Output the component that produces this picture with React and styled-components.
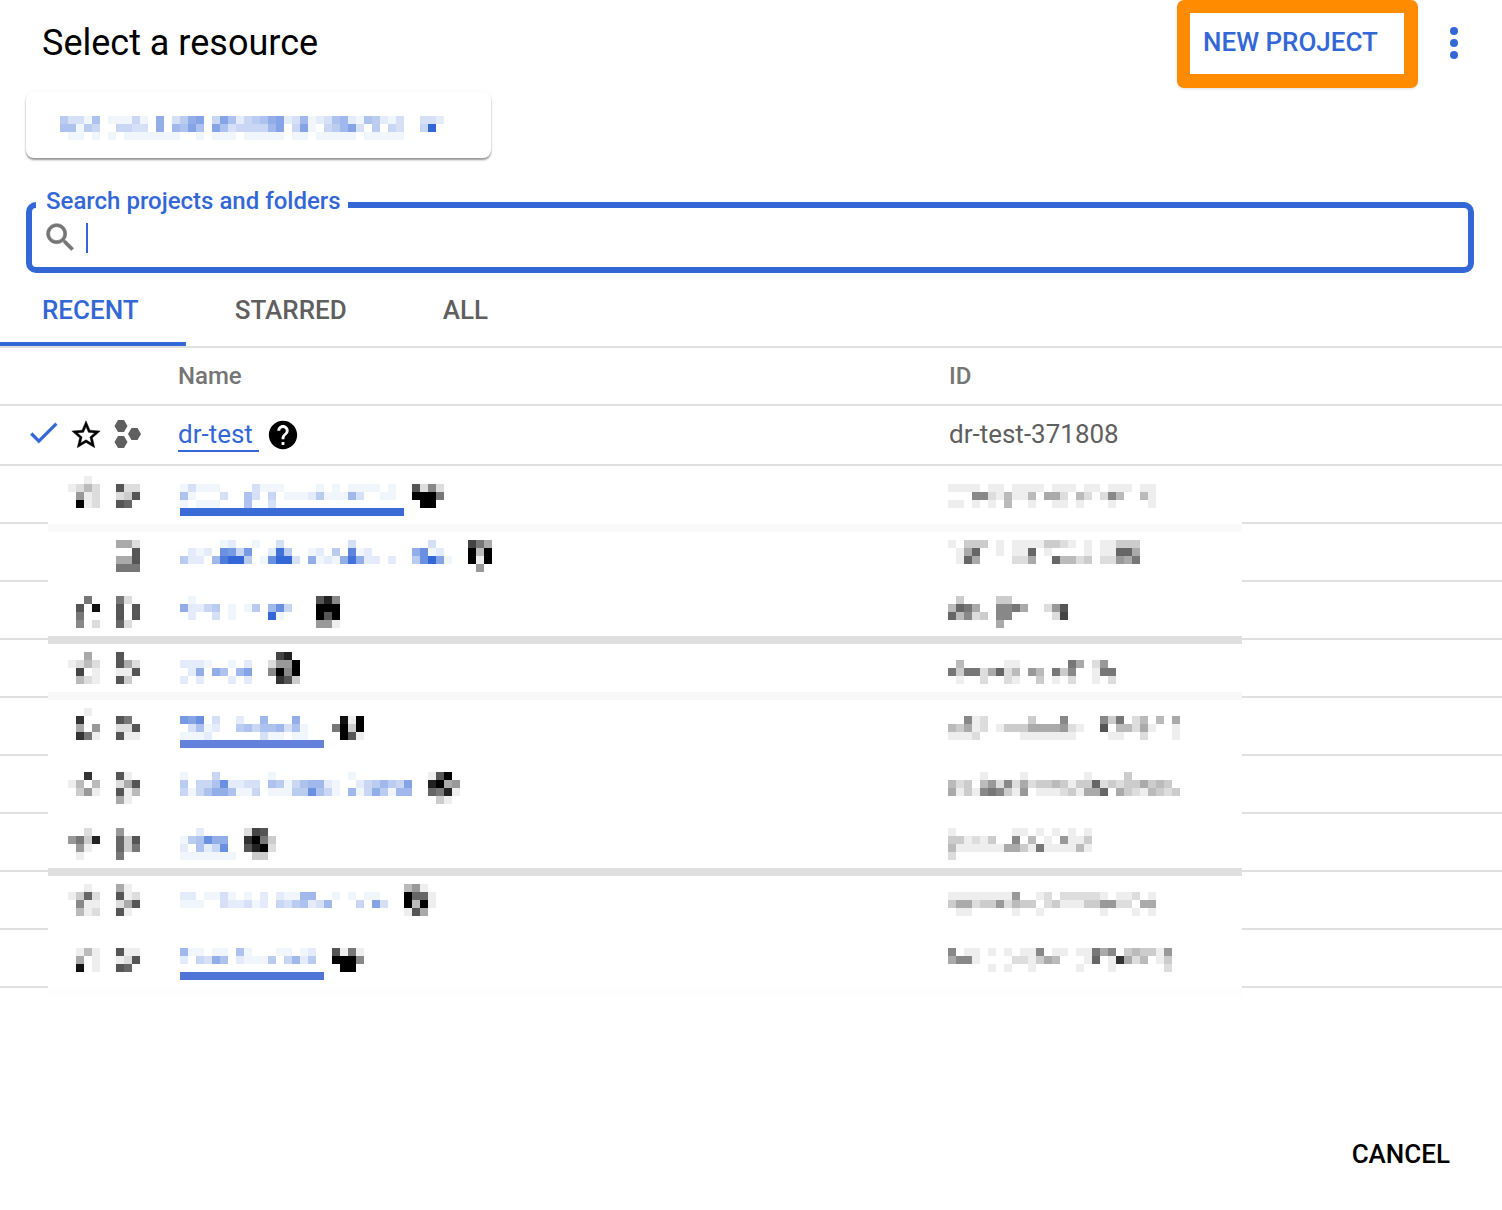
import React from 'react';
import styled, { createGlobalStyle } from 'styled-components';

const BLUE = '#3367d6';
const CELL = 8;

const GlobalStyle = createGlobalStyle`
  html, body {
    margin: 0;
    padding: 0;
    background: #fff;
  }
  body {
    font-family: Roboto, "Liberation Sans", sans-serif;
    color: #000;
  }
`;

const Page = styled.div`
  width: 1502px;
  height: 1210px;
  overflow: hidden;
  display: flex;
  flex-direction: column;
  background: #fff;
`;

const Header = styled.header`
  height: 92px;
  display: flex;
  align-items: flex-start;
  padding-left: 42px;
`;

const Title = styled.h1`
  flex: 1;
  margin: 21px 0 0;
  font-size: 36px;
  line-height: 44px;
  font-weight: 400;
`;

const NewProject = styled.button`
  box-sizing: border-box;
  width: 241px;
  height: 88px;
  padding: 0 0 3px 13px;
  margin: 0;
  border-style: solid;
  border-color: #ff8c00;
  border-width: 13px 14px 14px 13px;
  border-radius: 7px;
  background: #fff;
  color: ${BLUE};
  font: 500 26px/34px Roboto, sans-serif;
  text-align: left;
  white-space: nowrap;
  box-shadow: 0 1px 3px rgba(0, 0, 0, 0.12);
`;

const More = styled.svg`
  flex: none;
  width: 12px;
  height: 36px;
  margin: 25px 42px 0 30px;
`;

const Chip = styled.div`
  box-sizing: border-box;
  width: 465px;
  height: 66px;
  margin-left: 26px;
  padding: 24px 0 0 34px;
  border-radius: 8px;
  background: #fff;
  box-shadow: 0 2px 2px rgba(0, 0, 0, 0.4), 0 0 6px rgba(0, 0, 0, 0.03);
`;

const SearchBox = styled.div`
  box-sizing: border-box;
  position: relative;
  width: 1448px;
  height: 71px;
  margin: 44px 0 0 26px;
  padding: 11px 0 0 10px;
  display: flex;
  align-items: flex-start;
  gap: 7px;
  border: 6px solid ${BLUE};
  border-radius: 10px;
`;

const SearchLabel = styled.label`
  position: absolute;
  left: 4px;
  top: -23px;
  padding: 0 7px 0 10px;
  background: #fff;
  color: ${BLUE};
  font-size: 24px;
  line-height: 32px;
  font-weight: 500;
  white-space: nowrap;
`;

const Caret = styled.span`
  width: 2px;
  height: 30px;
  margin-top: 4px;
  background: ${BLUE};
`;

const Tabs = styled.nav`
  height: 73px;
  margin-top: 2px;
  display: flex;
  box-sizing: border-box;
  border-bottom: 2px solid #e0e0e0;
`;

const Tab = styled.div`
  box-sizing: border-box;
  height: 71px;
  padding: 0 47px 0 ${(p) => (p.$first ? 42 : 49)}px;
  font-size: 26px;
  line-height: 70px;
  font-weight: 500;
  white-space: nowrap;
  color: ${(p) => (p.$active ? BLUE : '#5f5f5f')};
  border-bottom: 4px solid ${(p) => (p.$active ? BLUE : 'transparent')};
`;

const Grid = styled.div`
  display: grid;
  grid-template-columns: 178px 770px 1fr;
  box-sizing: border-box;
  border-bottom: 2px solid #e0e0e0;
`;

const HeadRow = styled(Grid)`
  height: 58px;
  align-items: center;
  color: #757575;
  font-size: 24px;
  font-weight: 500;
`;

const HeadId = styled.span`
  margin-left: 1px;
`;

const ActiveRow = styled(Grid)`
  height: 60px;
  align-items: center;
`;

const BlurRow = styled(Grid)`
  position: relative;
  height: 58px;
  align-items: start;

  /* the pixelated band over the separator */
  &::after {
    content: '';
    position: absolute;
    left: 48px;
    width: 1194px;
    height: ${CELL}px;
    top: ${(p) => p.$bandTop ?? 58}px;
    background: ${(p) => p.$band || '#fff'};
    box-shadow: 0 -${CELL}px 0 #fff;
  }
`;

const IconCell = styled.div`
  display: flex;
  align-items: flex-start;
  padding-left: 68px;
`;

const ActiveIcons = styled.div`
  display: flex;
  align-items: center;
  padding-left: 25px;
`;

const NameCell = styled.div`
  display: flex;
  align-items: ${(p) => (p.$center ? 'center' : 'flex-start')};
`;

const NameStack = styled.div`
  display: flex;
  flex-direction: column;
  margin: ${(p) => p.$top}px 0 0 2px;
`;

const Underline = styled.div`
  width: ${(p) => p.$width}px;
  height: ${CELL}px;
  background: ${(p) => p.$color};
`;

const ProjectLink = styled.a`
  box-sizing: border-box;
  width: 81px;
  height: 33px;
  color: ${BLUE};
  font-size: 26px;
  line-height: 30px;
  border-bottom: 2px solid ${BLUE};
`;

const ProjectId = styled.div`
  color: #5f5f5f;
  font-size: 26px;
  margin: -2px 0 0 1px;
`;

const Footer = styled.footer`
  flex: 1;
  display: flex;
  justify-content: flex-end;
  align-items: flex-start;
  padding: 148px 52px 0 0;
`;

const Cancel = styled.button`
  padding: 0;
  border: 0;
  background: none;
  color: #000;
  font: 500 26px/36px Roboto, sans-serif;
`;

const Pixels = styled.svg`
  display: block;
  flex: none;
  margin-top: ${(p) => p.$top || 0}px;
  margin-left: ${(p) => p.$left || 0}px;
`;

const Icon = styled.svg`
  display: block;
  flex: none;
  margin-top: ${(p) => p.$top || 0}px;
  margin-left: ${(p) => p.$left || 0}px;
`;

// cells are hex darkness levels, one string per pixel row
const Mosaic = ({ cells, tint = '#000', top, left }) => {
  const rows = cells.split(' ');
  const cols = Math.max(...rows.map((r) => r.length));
  return (
    <Pixels
      $top={top}
      $left={left}
      width={cols * CELL}
      height={rows.length * CELL}
      viewBox={`0 0 ${cols} ${rows.length}`}
      shapeRendering="crispEdges"
    >
      {rows.map((row, y) =>
        [...row].map((c, x) => {
          const level = parseInt(c, 16);
          return level ? (
            <rect key={`${x}-${y}`} x={x} y={y} width="1" height="1" fill={tint} opacity={level / 15} />
          ) : null;
        })
      )}
    </Pixels>
  );
};

const Glyph = ({ d, size, color, top, left, bold }) => (
  <Icon
    $top={top}
    $left={left}
    width={size}
    height={size}
    viewBox="0 0 24 24"
    fill={color}
    stroke={bold ? color : 'none'}
    strokeWidth={bold || 0}
  >
    <path d={d} />
  </Icon>
);

const SEARCH =
  'M15.5 14h-.79l-.28-.27C15.41 12.59 16 11.11 16 9.5 16 5.91 13.09 3 9.5 3S3 5.91 3 9.5 5.91 16 9.5 16c1.61 0 3.09-.59 4.23-1.57l.27.28v.79l5 4.99L20.49 19l-4.99-5zm-6 0C7.01 14 5 11.99 5 9.5S7.01 5 9.5 5 14 7.01 14 9.5 11.99 14 9.5 14z';
const CHECK = 'M9 16.2L4.8 12l-1.4 1.4L9 19 21 7l-1.4-1.4L9 16.2z';
const STAR =
  'M22 9.24l-7.19-.62L12 2 9.19 8.63 2 9.24l5.46 4.73L5.82 21 12 17.27 18.18 21l-1.63-7.03L22 9.24zM12 15.4l-3.76 2.27 1-4.28-3.32-2.88 4.38-.38L12 6.1l1.71 4.04 4.38.38-3.32 2.88 1 4.28L12 15.4z';
const HELP =
  'M12 2C6.48 2 2 6.48 2 12s4.48 10 10 10 10-4.48 10-10S17.52 2 12 2zm1 17h-2v-2h2v2zm2.07-7.75l-.9.92C13.45 12.9 13 13.5 13 15h-2v-.5c0-1.1.45-2.1 1.17-2.83l1.24-1.26c.37-.36.59-.86.59-1.41 0-1.1-.9-2-2-2s-2 .9-2 2H8c0-2.21 1.79-4 4-4s4 1.79 4 4c0 .88-.36 1.68-.93 2.25z';

const Hive = () => (
  <Icon $left={11} width="30" height="32" viewBox="0 0 30 32" fill="#5f5f5f">
    <polygon points="0.5,7 4,1 10,1 13.5,7 10,13 4,13" />
    <polygon points="0.5,23 4,17 10,17 13.5,23 10,29 4,29" />
    <polygon points="14,15 17.5,9 23.5,9 27,15 23.5,21 17.5,21" />
  </Icon>
);

const CHIP_CELLS = [
  '533160111410803589049624568923712367216521300332',
  '6615400443308076960963444479049104579305043004f0',
  '011010101111111001011101111101101111101111100000',
].join(' ');

const ROWS = [
  {
    star: [10, '0010 1242 0612 0f12'],
    hive: [18, 'a22 23a a90'],
    name: [18, '131110000311100001010111101 610003006304011125111730011 101110006003000000000000000'],
    underline: [224, '#3b6bd6'],
    gap: 8,
    badge: [18, 'a272 fff8 0ff0'],
    id: [18, '11110110111101110110111011 00077214114055204202740041 11010104001001101000100001'],
    band: '#fafafa',
  },
  {
    hive: [16, '552 00a 55a 888'],
    name: [16, '0000012001003000000003000000000300 02120ba4a002e50012050c12000008b120 52207dff501bff3081218e82202005bf91'],
    gap: 16,
    badge: [16, 'b85 f4f f1f 060'],
    id: [16, '103330101111332101011333 015900101190100001011995 019500002250094423022658'],
  },
  {
    star: [14, '0080 0a0e 0800 0702'],
    hive: [14, '820 a0a a0a 920'],
    name: [14, '010000000000000 822450101507b40 02003010000f100'],
    gap: 16,
    badge: [14, 'ad7 fff faf 661'],
    id: [14, '030000330000000 49850077850026a 94723077000002b 000000500000000'],
    bandTop: 54,
    band: '#dfdfdf',
  },
  {
    star: [12, '0050 1242 0b01 0421'],
    hive: [12, 'a00 a52 11a a30'],
    name: [20, '222100102 028086079 202000202'],
    gap: 16,
    badge: [12, '0bd0 266f 7f7f 0ca3'],
    id: [20, '0400000110000008502600 8388259240640837001880 0100200210030102001020'],
    bandTop: 52,
    band: '#f8f8f8',
  },
  {
    star: [10, '0010 0c00 0506 0c81'],
    hive: [18, 'a80 22a a11'],
    name: [18, 'a9b03002007000800 03612005646673610 11120000003110110'],
    underline: [144, '#6482dc'],
    gap: 8,
    badge: [18, '0e1f 8f3f 0fa1'],
    id: [18, '00712000003000700007380240405 4351201333555562100a044251001 11120000011111110000110020001'],
  },
  {
    star: [16, '00c0 1404 0361'],
    hive: [16, 'a10 25a a14 510'],
    name: [16, '10004000000100000000010000000 50446b22330651467721002457549 4146886114011155b641071485177'],
    gap: 16,
    badge: [16, '1af0 df56 98d1 0310'],
    id: [16, '00001000010000000100003000000 42304627252334313392323353430 51317873160111231559053214323'],
  },
  {
    star: [14, '0020 683d 0610 0100'],
    hive: [14, '600 93a 938 800'],
    name: [14, '0020000 156b880 20624b0 1111111'],
    gap: 8,
    badge: [14, '2ba0 cf83 adf2 0330'],
    id: [14, '100000001101010101 331213007040106113 411111155318111141 200000000000000000'],
    bandTop: 54,
    band: '#dfdfdf',
  },
  {
    star: [12, '0010 1392 0711 0412'],
    hive: [12, '510 a12 25a a10'],
    name: [20, '22011310102021177001010110 11100322312043562370004093'],
    gap: 16,
    badge: [12, '4610 f991 f4f1 1a50'],
    id: [20, '11111111600120222221011201 35523362433023111336622055 01100000100100000001000101'],
  },
  {
    star: [10, '0000 0141 0501 0e01'],
    hive: [18, 'a11 12a a90'],
    name: [18, '71101106100011012 20438602111504725 00000000000000000'],
    underline: [144, '#5074d8'],
    gap: 8,
    badge: [18, 'a181 fff7 0ff0'],
    id: [18, '7011010101170110118570343316 577100002213540001901c524013 0000010100100000100010000002'],
    band: '#fdfdfd',
  },
];

const BlurredRow = ({ row }) => (
  <BlurRow $bandTop={row.bandTop} $band={row.band}>
    <IconCell>
      {row.star && <Mosaic cells={row.star[1]} top={row.star[0]} />}
      <Mosaic cells={row.hive[1]} top={row.hive[0]} left={row.star ? 16 : 48} />
    </IconCell>
    <NameCell>
      <NameStack $top={row.name[0]}>
        <Mosaic cells={row.name[1]} tint={BLUE} />
        {row.underline && <Underline $width={row.underline[0]} $color={row.underline[1]} />}
      </NameStack>
      <Mosaic cells={row.badge[1]} top={row.badge[0]} left={row.gap} />
    </NameCell>
    <Mosaic cells={row.id[1]} top={row.id[0]} />
  </BlurRow>
);

export default function App() {
  return (
    <Page>
      <GlobalStyle />
      <Header>
        <Title>Select a resource</Title>
        <NewProject>NEW PROJECT</NewProject>
        <More viewBox="0 0 12 36" fill={BLUE}>
          <circle cx="6" cy="6" r="4" />
          <circle cx="6" cy="18" r="4" />
          <circle cx="6" cy="30" r="4" />
        </More>
      </Header>
      <Chip>
        <Mosaic cells={CHIP_CELLS} tint={BLUE} />
      </Chip>
      <SearchBox>
        <SearchLabel>Search projects and folders</SearchLabel>
        <Glyph d={SEARCH} size={37} color="#757575" bold={0.4} />
        <Caret />
      </SearchBox>
      <Tabs>
        <Tab $first $active>RECENT</Tab>
        <Tab>STARRED</Tab>
        <Tab>ALL</Tab>
      </Tabs>
      <HeadRow>
        <span />
        <span>Name</span>
        <HeadId>ID</HeadId>
      </HeadRow>
      <ActiveRow>
        <ActiveIcons>
          <Glyph d={CHECK} size={37} color={BLUE} top={-5} bold={0.2} />
          <Glyph d={STAR} size={34} color="#000" left={7} bold={0.3} />
          <Hive />
        </ActiveIcons>
        <NameCell $center>
          <ProjectLink>dr-test</ProjectLink>
          <Glyph d={HELP} size={34} color="#000" top={-1} left={7} />
        </NameCell>
        <ProjectId>dr-test-371808</ProjectId>
      </ActiveRow>
      {ROWS.map((row, i) => (
        <BlurredRow key={i} row={row} />
      ))}
      <Footer>
        <Cancel>CANCEL</Cancel>
      </Footer>
    </Page>
  );
}
